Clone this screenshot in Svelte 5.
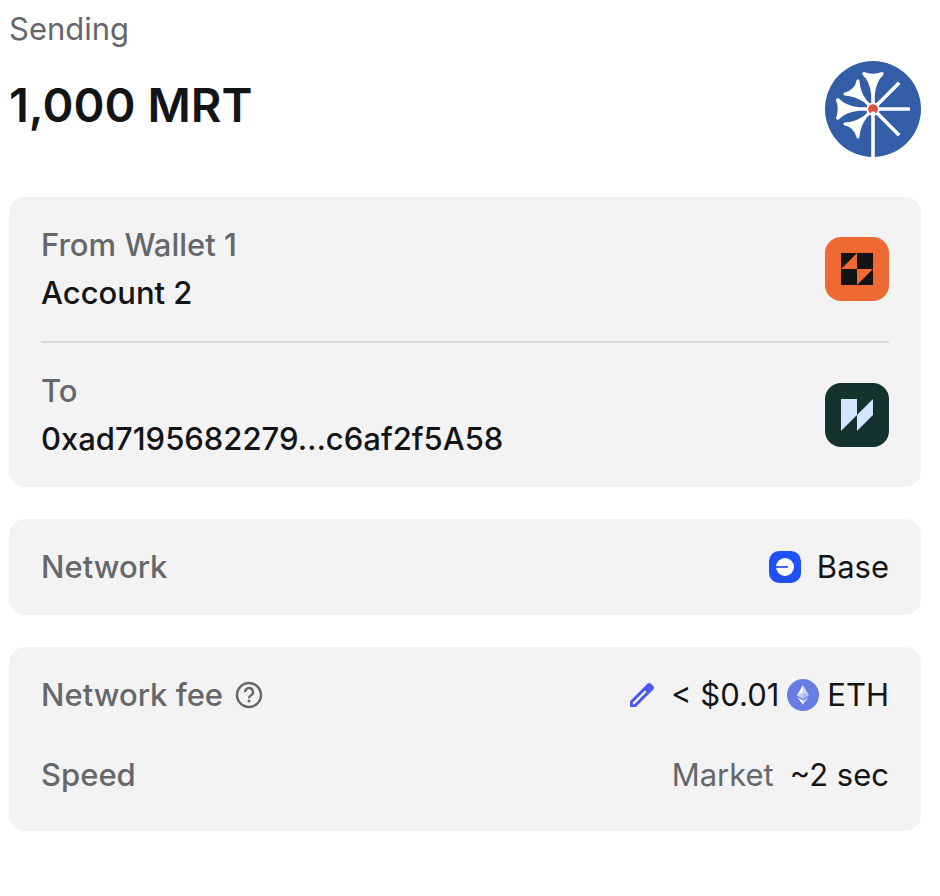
<script>
  const token = { amount: '1,000', symbol: 'MRT' };
  const fromWallet = 'Wallet 1';
  const fromAccount = 'Account 2';
  const recipient = '0xad7195682279…c6af2f5A58';
  const network = 'Base';
  const fee = '< $0.01';
  const feeSymbol = 'ETH';
  const speed = 'Market';
  const duration = '~2 sec';

  // Upright petals reach further out than the diagonal ones.
  const longPetals = [0, -90];
  const shortPetals = [-45, -135];
  const spokes = [45, 90, 135];
</script>

<main>
  <header>
    <p class="muted light">Sending</p>
    <div class="row top">
      <h1>{token.amount} {token.symbol}</h1>
      <svg class="token" viewBox="0 0 96 96" aria-hidden="true">
        <circle cx="48" cy="48" r="48" fill="#345da7" />
        {#each longPetals as angle (angle)}
          <path
            transform={`rotate(${angle} 48 48)`}
            d="M46.2 44V34Q45.2 21 37.6 13.8Q36.6 11.4 39 11Q48 14.4 57 11Q59.4 11.4 58.4 13.8Q50.8 21 49.8 34V44Z"
            fill="#fff"
          />
        {/each}
        {#each shortPetals as angle (angle)}
          <path
            transform={`rotate(${angle} 48 48)`}
            d="M46.4 44V37Q44.4 26 37.6 18.4Q36.6 16.2 39 16Q48 22 57 16Q59.4 16.2 58.4 18.4Q51.6 26 49.6 37V44Z"
            fill="#fff"
          />
        {/each}
        {#each spokes as angle (angle)}
          <path transform={`rotate(${angle} 48 48)`} d="M48 44V11" stroke="#fff" stroke-width="3.6" />
        {/each}
        <path d="M48 50V96" stroke="#fff" stroke-width="3.6" />
        <circle cx="48" cy="48" r="6.6" fill="#fff" />
        <path d="M45.5 52.5A5 5 0 1 1 50.5 52.5L49.5 50.5H46.5Z" fill="#d9513f" />
      </svg>
    </div>
  </header>

  <section class="card">
    <div class="row">
      <div class="party">
        <p class="muted">From {fromWallet}</p>
        <p class="strong">{fromAccount}</p>
      </div>
      <svg class="avatar" viewBox="0 0 64 64" aria-hidden="true">
        <rect width="64" height="64" rx="16" fill="#ee6a32" />
        <rect x="16" y="16" width="32" height="32" fill="#141414" />
        <path d="M32 16V32H16ZM32 32H48L32 48Z" fill="#ee6a32" />
      </svg>
    </div>
    <hr />
    <div class="row">
      <div class="party">
        <p class="muted">To</p>
        <p class="strong">{recipient}</p>
      </div>
      <svg class="avatar" viewBox="0 0 64 64" aria-hidden="true">
        <rect width="64" height="64" rx="16" fill="#14332e" />
        <path d="M16 16H32V32L48 16V32L32 48V32L16 48Z" fill="#d3e5ff" />
      </svg>
    </div>
  </section>

  <section class="card">
    <div class="row">
      <p class="muted">Network</p>
      <div class="value network">
        <svg class="coin" viewBox="0 0 32 32" aria-hidden="true">
          <rect width="32" height="32" rx="10" fill="#1f51f5" />
          <circle cx="16" cy="16" r="9" fill="#fff" />
          <path d="M7 16H19" stroke="#1f51f5" stroke-width="1.7" />
        </svg>
        <span>{network}</span>
      </div>
    </div>
  </section>

  <section class="card fees">
    <div class="row">
      <div class="label">
        <p class="muted">Network fee</p>
        <button type="button" aria-label="About the network fee">
          <svg class="help" viewBox="0 0 28 28" aria-hidden="true">
            <circle cx="14" cy="14" r="12" fill="none" stroke="#66676a" stroke-width="2.5" />
            <path
              d="M10.2 11.2A3.9 3.9 0 1 1 16.2 14.2Q14 15.5 14 17.2"
              fill="none"
              stroke="#66676a"
              stroke-width="2.3"
            />
            <circle cx="14" cy="20" r="1.5" fill="#66676a" />
          </svg>
        </button>
      </div>
      <div class="value">
        <button class="edit" type="button" aria-label="Edit network fee">
          <svg class="pencil" viewBox="0 0 26 26" aria-hidden="true">
            <path
              fill-rule="evenodd"
              d="M1 25V19.2L18.2 2Q20.2 0 22.2 2L24 3.8Q26 5.8 24 7.8L6.8 25ZM3.8 22.2H5.4L17.6 10L16 8.400L3.8 20.600Z"
              fill="#4b58f2"
            />
          </svg>
        </button>
        <span>{fee}</span>
        <svg class="coin" viewBox="0 0 32 32" aria-hidden="true">
          <circle cx="16" cy="16" r="16" fill="#687de3" />
          <path d="M16 6L10 16.2L16 19.7Z" fill="#fff" />
          <path d="M16 6L22 16.2L16 19.7Z" fill="#c8cff5" />
          <path d="M10 16.2L16 13.5L22 16.2L16 19.7Z" fill="#a9b5ef" opacity="0.7" />
          <path d="M10 18L16 25.5V21.4Z" fill="#fff" />
          <path d="M22 18L16 25.5V21.4Z" fill="#c8cff5" />
        </svg>
        <span>{feeSymbol}</span>
      </div>
    </div>
    <div class="row">
      <p class="muted">Speed</p>
      <div class="value speed">
        <span class="muted light">{speed}</span>
        <span>{duration}</span>
      </div>
    </div>
  </section>
</main>

<style>
  :global(body) {
    margin: 0;
    background: #fff;
  }
  main {
    display: flex;
    flex-direction: column;
    gap: 32px;
    padding: 5px 19px 32px 9px;
    font-family: Inter, "Liberation Sans", sans-serif;
    font-size: 31px;
    line-height: 48px;
    color: #131416;
  }
  header {
    display: flex;
    flex-direction: column;
    gap: 8px;
    padding-bottom: 8px;
  }
  p,
  h1 {
    margin: 0;
  }
  h1 {
    font-size: 47px;
    font-weight: 600;
    line-height: 88px;
  }
  .row {
    display: flex;
    align-items: center;
    justify-content: space-between;
  }
  .top {
    align-items: flex-start;
  }
  .card {
    padding: 24px 32px;
    border-radius: 16px;
    background: #f3f3f3;
  }
  .fees {
    display: flex;
    flex-direction: column;
    gap: 32px;
    padding-bottom: 32px;
  }
  hr {
    height: 2px;
    margin: 24px 0;
    border: 0;
    background: #d9d9da;
  }
  .muted {
    color: #66676a;
    font-weight: 500;
  }
  .light {
    font-weight: 400;
  }
  .strong {
    font-weight: 500;
  }
  .label,
  .value {
    display: flex;
    align-items: center;
    gap: 8px;
  }
  .label {
    gap: 12px;
  }
  .network,
  .speed {
    gap: 16px;
  }
  button {
    display: flex;
    padding: 0;
    border: 0;
    background: none;
    cursor: pointer;
  }
  .edit {
    margin-right: 8px;
  }
  svg {
    display: block;
    flex-shrink: 0;
  }
  .token {
    width: 96px;
    height: 96px;
  }
  .avatar {
    width: 64px;
    height: 64px;
  }
  .coin {
    width: 32px;
    height: 32px;
  }
  .help {
    width: 28px;
    height: 28px;
  }
  .pencil {
    width: 26px;
    height: 26px;
  }
</style>
